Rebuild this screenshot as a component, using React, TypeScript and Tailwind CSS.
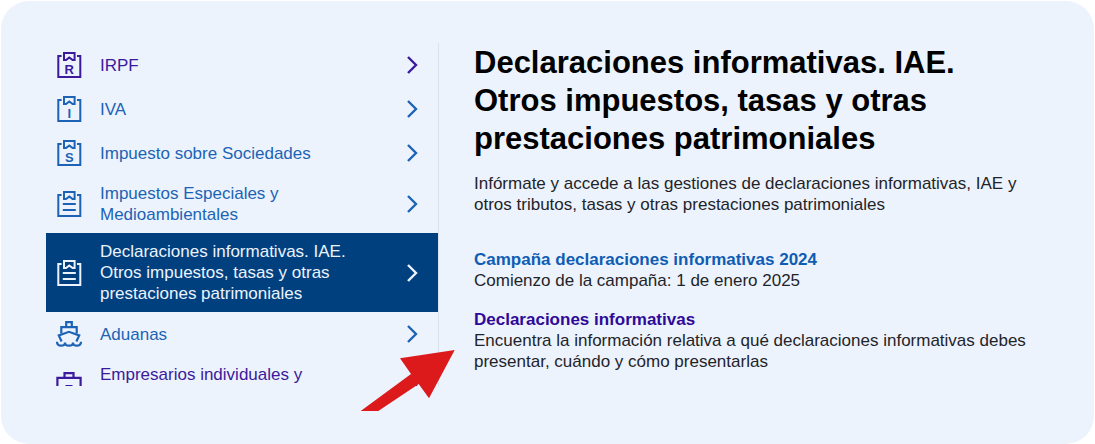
import type { ReactNode } from "react";

type Item = {
  label: string;
  icon: ReactNode;
  visited?: boolean;
  active?: boolean;
  tall?: boolean;
};

function Clipboard({ letter }: { letter?: string }) {
  return (
    <svg viewBox="0 0 26 26" className="size-[26px] shrink-0" fill="none" stroke="currentColor" strokeWidth="2" aria-hidden="true">
      <path d="M5.6 4H2.300v21h22V4H21" />
      <path d="M8 1h10.600v7h-2l-3.300-2.600L10 8H8z" />
      {letter ? (
        <text x="13.300" y="21.500" textAnchor="middle" fontSize="13" fontWeight="700" fill="currentColor" stroke="none">
          {letter}
        </text>
      ) : (
        <path d="M6.800 13h13M6.800 19h13" />
      )}
    </svg>
  );
}

function Ship() {
  return (
    <svg viewBox="0 0 26 26" className="size-[26px] shrink-0" fill="none" stroke="currentColor" strokeWidth="2.2" aria-hidden="true">
      <path d="M10.200 6V1.200h5.600V6" />
      <path d="M5.300 12.500V6.200h15.400v6.300" />
      <path d="M5.600 20.500L2.800 14.400 13 10.800l10.200 3.600-2.800 6.100" />
      <path d="M1 20.800c0 2.600 1.800 3.900 4 3.900s4-1.300 4-3.300c0 2 1.800 3.300 4 3.300s4-1.300 4-3.300c0 2 1.800 3.300 4 3.300s4-1.300 4-3.900" />
    </svg>
  );
}

function Briefcase() {
  return (
    <svg viewBox="0 0 26 26" className="size-[26px] shrink-0" fill="none" stroke="currentColor" strokeWidth="2.2" aria-hidden="true">
      <path d="M1.400 5.800h23.200V24H1.400z" />
      <path d="M8.500 5.500V1.200h9v4.300M9.500 14h7" />
    </svg>
  );
}

function Chevron() {
  return (
    <svg viewBox="0 0 12 18" className="h-[18px] w-3 shrink-0" fill="none" stroke="currentColor" strokeWidth="2.4" aria-hidden="true">
      <path d="M2 1l8 8-8 8" />
    </svg>
  );
}

const items: Item[] = [
  { label: "IRPF", icon: <Clipboard letter="R" />, visited: true },
  { label: "IVA", icon: <Clipboard letter="I" /> },
  { label: "Impuesto sobre Sociedades", icon: <Clipboard letter="S" /> },
  { label: "Impuestos Especiales y Medioambientales", icon: <Clipboard /> },
  {
    label: "Declaraciones informativas. IAE. Otros impuestos, tasas y otras prestaciones patrimoniales",
    icon: <Clipboard />,
    active: true,
  },
  { label: "Aduanas", icon: <Ship /> },
  { label: "Empresarios individuales y", icon: <Briefcase />, visited: true, tall: true },
];

function itemColor(item: Item) {
  if (item.active) return "bg-[#00407f] text-[#ecf3fd]";
  return item.visited ? "text-[#3c1a9c]" : "text-[#1c63b5]";
}

export default function App() {
  return (
    <div className="min-h-screen bg-white px-px pt-px font-['Liberation_Sans',Arial,sans-serif] text-[17px] leading-[21px] text-[#1f2429]">
      <div className="flex min-h-[calc(100vh-1px)] items-start rounded-[28px] bg-[#ecf3fd] pt-[42px] pr-8 pb-14 pl-[45px]">
        <div className="relative w-[393px] shrink-0">
          <nav aria-label="Impuestos y tasas" className="max-h-[343px] overflow-hidden border-r border-[#dbe3ee]">
            <ul>
              {items.map((item) => (
                <li key={item.label}>
                  <a
                    href="#"
                    aria-current={item.active ? "page" : undefined}
                    className={`flex items-center gap-[18px] py-2 pr-5 pl-2.5 ${item.tall ? "min-h-[58px]" : "min-h-11"} ${itemColor(item)}`}
                  >
                    {item.icon}
                    <span className={`flex-1 pr-8 ${item.tall ? "self-start" : ""}`}>{item.label}</span>
                    <Chevron />
                  </a>
                </li>
              ))}
            </ul>
          </nav>

          {/* pointer towards the "Declaraciones informativas" link */}
          <svg viewBox="0 0 95 62" className="absolute -right-4 -bottom-[25px] h-[62px] w-[95px]" aria-hidden="true">
            <path d="M94.700 1L40 9.300l11 15.700L0.700 62h17.600l40.400-27L69 49.300z" fill="#dc1a1c" />
          </svg>
        </div>

        <main className="ml-[35px] max-w-xl flex-1 pt-px">
          <h1 className="max-w-lg text-[31px] leading-[38px] font-bold text-black">
            Declaraciones informativas. IAE. Otros impuestos, tasas y otras prestaciones patrimoniales
          </h1>
          <p className="mt-[15px]">
            Infórmate y accede a las gestiones de declaraciones informativas, IAE y otros tributos, tasas y otras
            prestaciones patrimoniales
          </p>

          <section className="mt-[34px]">
            <h2 className="font-bold text-[#0f5db3]">
              <a href="#">Campaña declaraciones informativas 2024</a>
            </h2>
            <p>Comienzo de la campaña: 1 de enero 2025</p>
          </section>

          <section className="mt-[18px]">
            <h2 className="font-bold text-[#2f0a99]">
              <a href="#">Declaraciones informativas</a>
            </h2>
            <p>
              Encuentra la información relativa a qué declaraciones informativas debes presentar, cuándo y cómo
              presentarlas
            </p>
          </section>
        </main>
      </div>
    </div>
  );
}
